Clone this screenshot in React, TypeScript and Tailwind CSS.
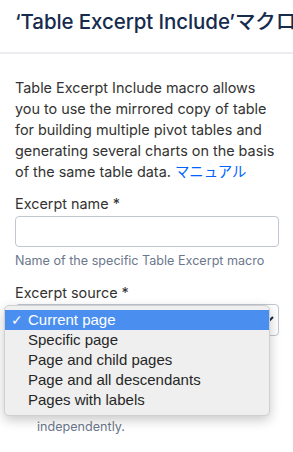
import React from "react";

const font = { fontFamily: 'Inter, "Liberation Sans", Arial, "Noto Sans CJK JP", sans-serif' };
const menuFont = { fontFamily: '"Liberation Sans", Arial, sans-serif' };

export default function App() {
  const items = ["Current page", "Specific page", "Page and child pages", "Page and all descendants", "Pages with labels"];
  const lines = [
    "Table Excerpt Include macro allows",
    "you to use the mirrored copy of table",
    "for building multiple pivot tables and",
    "generating several charts on the basis",
  ];
  return (
    <div className="relative w-[293px] h-[452px] overflow-hidden bg-white" style={font}>
      <div className="pt-[8px] pb-[16px] border-b-2 border-[#ebecf0] pl-[15px] whitespace-nowrap overflow-hidden">
        <div className="text-[20.5px] leading-[28px] font-medium text-[#172b4d] tracking-[-0.1px]">
          ‘Table Excerpt Include’マクロの使用
        </div>
      </div>
      <div className="px-[15px]">
        <div className="mt-[23px] text-[14.4px] leading-[21px] text-[#333333] whitespace-nowrap">
          {lines.map((l) => (
            <div key={l}>{l}</div>
          ))}
          <div>
            of the same table data. <span className="text-[#0065ff]">マニュアル</span>
          </div>
        </div>
        <div className="mt-[12px] text-[14.4px] leading-[20px] text-[#333333]">Excerpt name *</div>
        <div className="mt-[2px] h-[31px] w-[264px] rounded-[4px] border border-[#c1c7d0] bg-white" />
        <div className="mt-[6px] text-[12.6px] leading-[16px] text-[#6b778c] whitespace-nowrap">Name of the specific Table Excerpt macro</div>
        <div className="mt-[14px] text-[14.4px] leading-[20px] text-[#333333]">Excerpt source *</div>
        <div className="mt-[1px] h-[32px] w-[264px] rounded-[4px] border border-[#c1c7d0] bg-white flex items-center justify-end pr-[4px]">
          <svg width="10" height="8" viewBox="0 0 10 8">
            <path d="M1 4 L3.5 6.5 L9 1" fill="none" stroke="#172b4d" strokeWidth="2" />
          </svg>
        </div>
        <div className="mt-[83px] pl-[22px] text-[12.6px] leading-[16px] text-[#6b778c]">independently.</div>
      </div>
      <div
        className="absolute left-[4px] top-[305px] w-[266px] h-[111px] rounded-[5px] border border-[#d0d0d0] bg-[#efefef] shadow-[0_4px_12px_rgba(0,0,0,0.22)] pt-[4px]"
        style={menuFont}
      >
        {items.map((it, i) => (
          <div
            key={it}
            className={
              "relative h-[20px] leading-[20px] text-[15px] pl-[23px] " +
              (i === 0 ? "bg-[#4a8ff0] text-white" : "text-[#262626]")
            }
          >
            {i === 0 && <span className="absolute left-[6px] top-0 text-[14px]">✓</span>}
            {it}
          </div>
        ))}
      </div>
    </div>
  );
}
